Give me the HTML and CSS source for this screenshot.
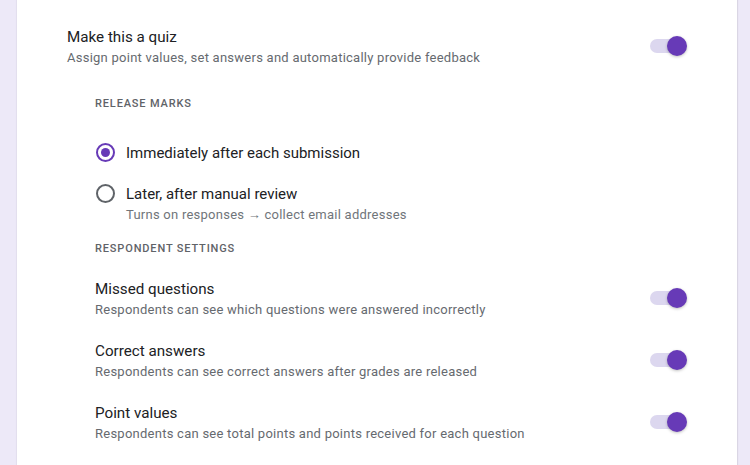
FILE: index.html
```html
<!DOCTYPE html>
<html>
<head>
<meta charset="utf-8">
<link rel="stylesheet" href="styles.css">
</head>
<body>
<div class="page">
  <div class="card">
    <div class="setting main">
      <div class="text">
        <div class="title">Make this a quiz</div>
        <div class="desc">Assign point values, set answers and automatically provide feedback</div>
      </div>
      <span class="toggle on"><span class="thumb"></span></span>
    </div>

    <div class="section">
      <div class="heading">Release marks</div>
      <div class="radios">
        <label class="radio-row">
          <span class="radio checked"></span>
          <span class="radio-text">
            <span class="radio-label">Immediately after each submission</span>
          </span>
        </label>
        <label class="radio-row second">
          <span class="radio"></span>
          <span class="radio-text">
            <span class="radio-label">Later, after manual review</span>
            <span class="radio-desc">Turns on responses → collect email addresses</span>
          </span>
        </label>
      </div>

      <div class="heading respondent">Respondent settings</div>
      <div class="list">
        <div class="setting">
          <div class="text">
            <div class="title">Missed questions</div>
            <div class="desc">Respondents can see which questions were answered incorrectly</div>
          </div>
          <span class="toggle on"><span class="thumb"></span></span>
        </div>
        <div class="setting">
          <div class="text">
            <div class="title">Correct answers</div>
            <div class="desc">Respondents can see correct answers after grades are released</div>
          </div>
          <span class="toggle on"><span class="thumb"></span></span>
        </div>
        <div class="setting">
          <div class="text">
            <div class="title">Point values</div>
            <div class="desc">Respondents can see total points and points received for each question</div>
          </div>
          <span class="toggle on"><span class="thumb"></span></span>
        </div>
      </div>
    </div>
  </div>
</div>
</body>
</html>
```
FILE: styles.css
```css
* { box-sizing: border-box; }
html, body {
  margin: 0;
  padding: 0;
  height: 100%;
}
body {
  background: #ede9f8;
  font-family: Roboto, "Noto Sans", Arial, sans-serif;
  color: #202124;
  overflow: hidden;
}
.page {
  display: flex;
  height: 465px;
  padding-left: 17px;
}
.card {
  width: 720px;
  height: 465px;
  background: #fff;
  box-shadow: 1px 0 1px rgba(0,0,0,0.08), -1px 0 1px rgba(0,0,0,0.04);
  padding: 26px 51px 0 50px;
}
.setting {
  display: flex;
  align-items: center;
  justify-content: space-between;
}
.title {
  font-size: 15.2px;
  line-height: 22px;
  color: #202124;
}
.desc {
  font-size: 13px;
  line-height: 20px;
  color: #666a6f;
  letter-spacing: 0.25px;
}
.toggle {
  position: relative;
  width: 36px;
  height: 14px;
  border-radius: 7px;
  background: #dcd7ef;
  flex: none;
  margin-top: -3px;
}
.thumb {
  position: absolute;
  right: -1px;
  top: -3px;
  width: 20px;
  height: 20px;
  border-radius: 50%;
  background: #673ab7;
  box-shadow: 0 1px 3px rgba(0,0,0,0.25);
}
.section {
  padding-left: 28px;
  margin-top: 28px;
}
.heading {
  font-size: 11px;
  line-height: 16px;
  font-weight: 500;
  letter-spacing: 0.85px;
  text-transform: uppercase;
  color: #5f6368;
}
.radios {
  margin-top: 29px;
  display: flex;
  flex-direction: column;
  gap: 17px;
}
.radio-row {
  display: flex;
  align-items: flex-start;
  gap: 11px;
}
.radio {
  flex: none;
  width: 19px;
  height: 19px;
  border: 2px solid #5f6368;
  border-radius: 50%;
  margin-top: 2px;
  margin-left: 1px;
  display: flex;
  align-items: center;
  justify-content: center;
}
.radio.checked {
  border-color: #673ab7;
}
.radio.checked::after {
  content: "";
  width: 9px;
  height: 9px;
  border-radius: 50%;
  background: #673ab7;
}
.radio-text {
  display: flex;
  flex-direction: column;
}
.radio-label {
  font-size: 15px;
  line-height: 24px;
  color: #202124;
}
.radio-desc {
  font-size: 13px;
  line-height: 18px;
  color: #70757a;
  letter-spacing: 0.25px;
}
.heading.respondent {
  margin-top: 17px;
}
.list {
  margin-top: 21px;
  display: flex;
  flex-direction: column;
  gap: 20px;
}
```
